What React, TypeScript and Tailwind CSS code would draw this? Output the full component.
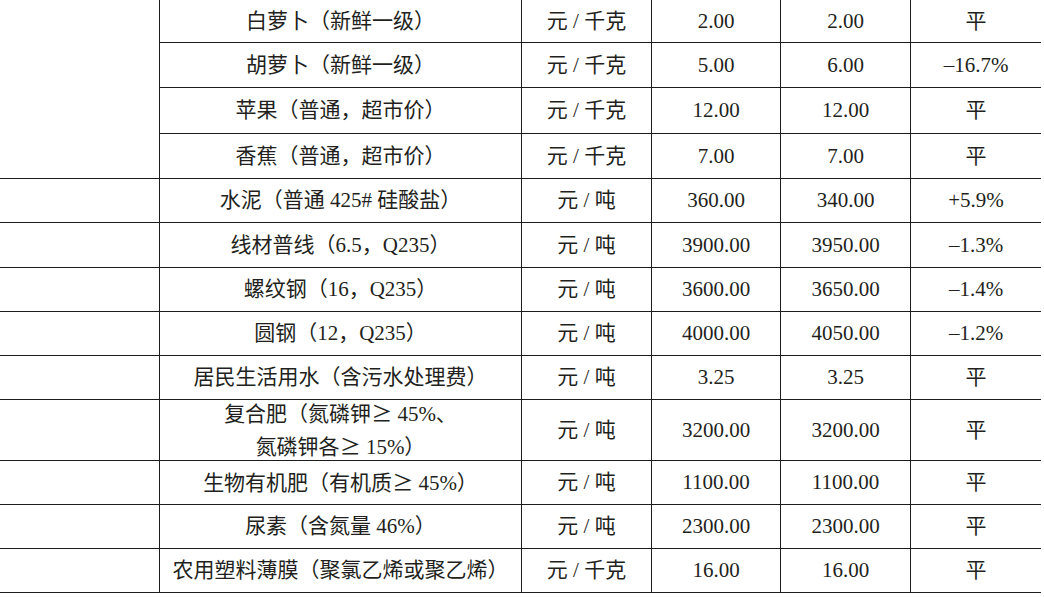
import React from "react";

type Row = {
  name: React.ReactNode;
  unit: string;
  prev: string;
  curr: string;
  change: string;
  h: string;
};

// wide CJK-style "≥" as in the printed table
const Ge = () => <span className="font-['Noto_Sans_CJK_JP',sans-serif]">≥</span>;

const rows: Row[] = [
  { name: "白萝卜（新鲜一级）", unit: "元 / 千克", prev: "2.00", curr: "2.00", change: "平", h: "h-[43px]" },
  { name: "胡萝卜（新鲜一级）", unit: "元 / 千克", prev: "5.00", curr: "6.00", change: "–16.7%", h: "h-[45px]" },
  { name: "苹果（普通，超市价）", unit: "元 / 千克", prev: "12.00", curr: "12.00", change: "平", h: "h-[46px]" },
  { name: "香蕉（普通，超市价）", unit: "元 / 千克", prev: "7.00", curr: "7.00", change: "平", h: "h-[45px]" },
  { name: "水泥（普通 425# 硅酸盐）", unit: "元 / 吨", prev: "360.00", curr: "340.00", change: "+5.9%", h: "h-[44px]" },
  { name: "线材普线（6.5，Q235）", unit: "元 / 吨", prev: "3900.00", curr: "3950.00", change: "–1.3%", h: "h-[45px]" },
  { name: "螺纹钢（16，Q235）", unit: "元 / 吨", prev: "3600.00", curr: "3650.00", change: "–1.4%", h: "h-[44px]" },
  { name: "圆钢（12，Q235）", unit: "元 / 吨", prev: "4000.00", curr: "4050.00", change: "–1.2%", h: "h-[44px]" },
  { name: "居民生活用水（含污水处理费）", unit: "元 / 吨", prev: "3.25", curr: "3.25", change: "平", h: "h-[44px]" },
  {
    name: (
      <>
        复合肥（氮磷钾<Ge /> 45%、
        <br />
        氮磷钾各<Ge /> 15%）
      </>
    ),
    unit: "元 / 吨",
    prev: "3200.00",
    curr: "3200.00",
    change: "平",
    h: "h-[61px]",
  },
  {
    name: (
      <>
        生物有机肥（有机质<Ge /> 45%）
      </>
    ),
    unit: "元 / 吨",
    prev: "1100.00",
    curr: "1100.00",
    change: "平",
    h: "h-[44px]",
  },
  { name: "尿素（含氮量 46%）", unit: "元 / 吨", prev: "2300.00", curr: "2300.00", change: "平", h: "h-[44px]" },
  { name: "农用塑料薄膜（聚氯乙烯或聚乙烯）", unit: "元 / 千克", prev: "16.00", curr: "16.00", change: "平", h: "h-[44px]" },
];

const cell = "flex items-center justify-center border-l border-b border-[#1c1c1c] text-center";

export default function App() {
  return (
    <div className="w-[1044px] h-[597px] bg-white overflow-hidden text-[#231f20] text-[21px] leading-[31px] font-['Liberation_Serif','Noto_Sans_CJK_SC',serif]">
      <div className="flex w-[1041px]">
        <div className="w-[159px] border-b border-[#1c1c1c]" />
        <div className="flex flex-col">
          {rows.slice(0, 4).map((r, i) => (
            <RowCells key={i} r={r} />
          ))}
        </div>
      </div>
      {rows.slice(4).map((r, i) => (
        <div key={i} className="flex w-[1041px]">
          <div className={`w-[159px] border-b border-[#1c1c1c] ${r.h}`} />
          <RowCells r={r} />
        </div>
      ))}
    </div>
  );
}

function RowCells({ r }: { r: Row }) {
  return (
    <div className={`flex ${r.h}`}>
      <div className={`${cell} w-[362px]`}>
        <span>{r.name}</span>
      </div>
      <div className={`${cell} w-[130px]`}>{r.unit}</div>
      <div className={`${cell} w-[129px]`}>{r.prev}</div>
      <div className={`${cell} w-[130px]`}>{r.curr}</div>
      <div className={`${cell} w-[131px]`}>{r.change}</div>
    </div>
  );
}
